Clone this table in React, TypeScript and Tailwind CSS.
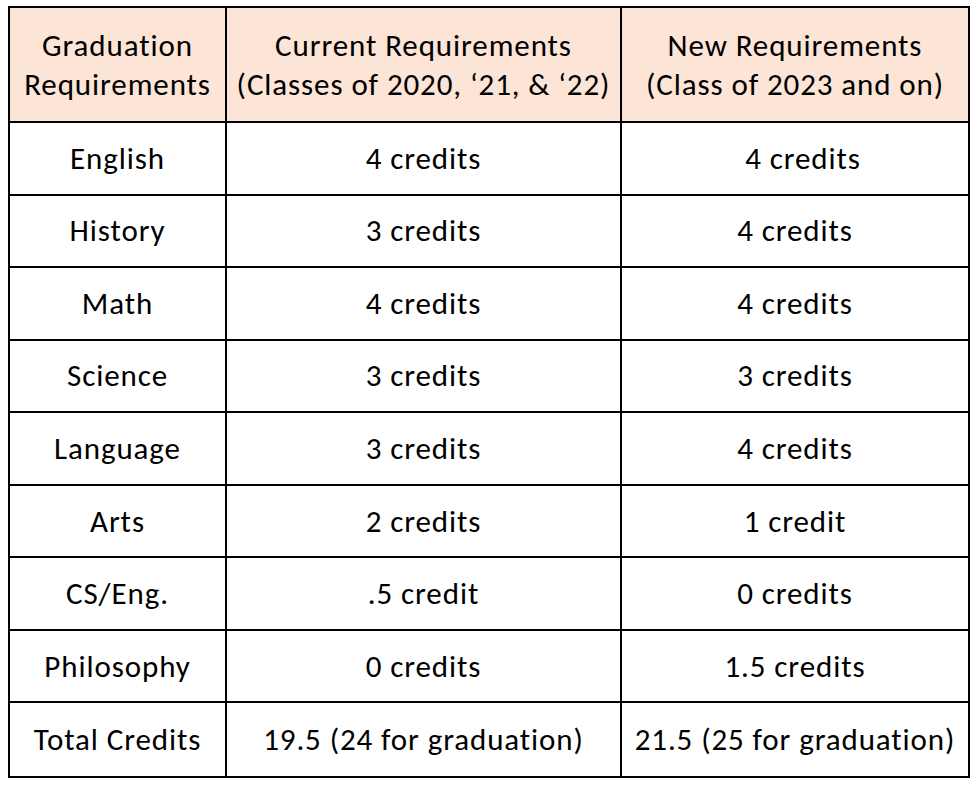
const header = [
  ["Graduation", "Requirements"],
  ["Current Requirements", "(Classes of 2020, \u201821, & \u201822)"],
  ["New Requirements", "(Class of 2023 and on)"],
];

const rows = [
  ["English", "4 credits", "4 credits"],
  ["History", "3 credits", "4 credits"],
  ["Math", "4 credits", "4 credits"],
  ["Science", "3 credits", "3 credits"],
  ["Language", "3 credits", "4 credits"],
  ["Arts", "2 credits", "1 credit"],
  ["CS/Eng.", ".5 credit", "0 credits"],
  ["Philosophy", "0 credits", "1.5 credits"],
  ["Total Credits", "19.5 (24 for graduation)", "21.5 (25 for graduation)"],
];

export default function App() {
  return (
    <div className="w-[978px] h-[788px] bg-white pl-2 pt-[6px]">
      <div
        className="grid w-[962px] h-[772px] grid-cols-[217px_395px_346px] grid-rows-[115px_repeat(9,1fr)] border-2 border-black text-[31px] leading-[39px] tracking-[0.9px] text-black"
        style={{ fontFamily: "Carlito, Lato, 'Open Sans', sans-serif" }}
      >
        {header.map((h, i) => (
          <div
            key={i}
            className={`flex flex-col items-center justify-center bg-[#fce4d6] border-b-2 border-black ${
              i < 2 ? "border-r-2" : ""
            }`}
          >
            <span>{h[0]}</span>
            <span>{h[1]}</span>
          </div>
        ))}
        {rows.map((r, ri) =>
          r.map((c, ci) => (
            <div
              key={`${ri}-${ci}`}
              className={`flex items-center justify-center border-black ${
                ci < 2 ? "border-r-2" : ""
              } ${ri < rows.length - 1 ? "border-b-2" : ""} ${
                ri === 0 && ci === 2 ? "pl-4" : ""
              }`}
            >
              {c}
            </div>
          ))
        )}
      </div>
    </div>
  );
}
